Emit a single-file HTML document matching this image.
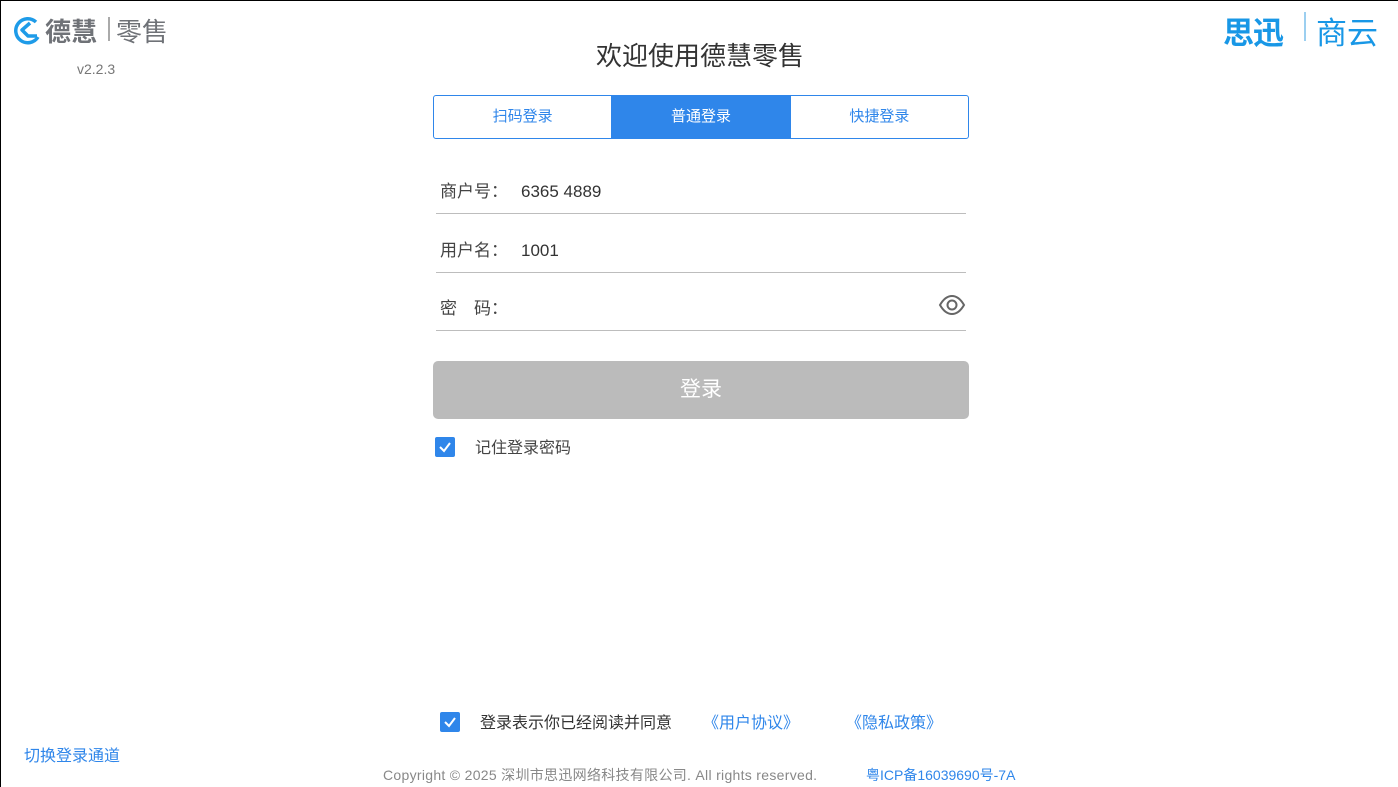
<!DOCTYPE html>
<html><head><meta charset="utf-8"><style>
*{margin:0;padding:0;box-sizing:border-box}
body{width:1398px;height:787px;background:#fff;position:relative;overflow:hidden;font-family:"Liberation Sans","Noto Sans CJK SC",sans-serif}
.a{position:absolute;white-space:nowrap}
.tabs{position:absolute;left:433px;top:95px;width:536px;height:44px;border:1.5px solid #2f86ea;border-radius:3px;display:flex;overflow:hidden}
.tabs div{flex:1;text-align:center;line-height:42px;font-size:15px;color:#2f86ea}
.tabs div+div{border-left:1.5px solid #2f86ea}
.tabs .on{background:#2f86ea;color:#fff}
.row{position:absolute;left:436px;width:530px;height:1px;background:#bdbdbd}
.lbl{font-size:17px;color:#444;line-height:22px}
.cb{position:absolute;width:20px;height:20px;background:#2f86ea;border-radius:2px}
.cb svg{position:absolute;left:3px;top:3px}
</style></head><body>
<div class="a" style="left:0;top:0;width:1398px;height:1px;background:#000"></div>
<div class="a" style="left:0;top:0;width:1px;height:787px;background:#000"></div>
<svg class="a" style="left:12px;top:15px" width="30" height="30" viewBox="0 0 30 30"><path d="M24 7A12 12 0 1 0 26 22" fill="none" stroke="#1e9be8" stroke-width="3.5"/><path d="M18 8L10 15L16 21H25" fill="none" stroke="#1e9be8" stroke-width="3.5" stroke-linejoin="round"/></svg>
<div class="a" style="left:45px;top:12px;font-size:26px;color:#6f7277;font-weight:bold">德慧</div>
<div class="a" style="left:108px;top:17px;width:2px;height:24px;background:#aaa"></div>
<div class="a" style="left:116px;top:12px;font-size:26px;color:#6f7277">零售</div>
<div class="a" style="left:77px;top:61px;font-size:14px;color:#777">v2.2.3</div>
<div class="a" style="left:1223px;top:8px;font-size:31px;color:#1897e6;font-weight:bold;letter-spacing:-1px">思迅</div>
<div class="a" style="left:1304px;top:12px;width:2px;height:29px;background:#9ccff0"></div>
<div class="a" style="left:1316px;top:8px;font-size:31px;color:#1897e6">商云</div>
<div class="a" style="left:596px;top:36px;font-size:26px;color:#333">欢迎使用德慧零售</div>
<div class="tabs"><div>扫码登录</div><div class="on">普通登录</div><div>快捷登录</div></div>
<div class="a lbl" style="left:440px;top:181px">商户号：</div>
<div class="a lbl" style="left:521px;top:181px;color:#333">6365 4889</div>
<div class="row" style="top:213px"></div>
<div class="a lbl" style="left:440px;top:240px">用户名：</div>
<div class="a lbl" style="left:521px;top:240px;color:#333">1001</div>
<div class="row" style="top:272px"></div>
<div class="a lbl" style="left:440px;top:298px">密　码：</div>
<svg class="a" style="left:938px;top:293px" width="28" height="24" viewBox="0 0 28 24"><path d="M2 12C6 5 10 3 14 3S22 5 26 12C22 19 18 21 14 21S6 19 2 12Z" fill="none" stroke="#666" stroke-width="2"/><circle cx="14" cy="12" r="4.5" fill="none" stroke="#666" stroke-width="2"/></svg>
<div class="row" style="top:330px"></div>
<div class="a" style="left:433px;top:361px;width:536px;height:58px;background:#bbb;border-radius:5px;color:#fff;font-size:21px;text-align:center;line-height:58px">登录</div>
<div class="cb" style="left:435px;top:437px"><svg width="14" height="14" viewBox="0 0 14 14"><path d="M2 7L6 11L12 3" fill="none" stroke="#fff" stroke-width="2"/></svg></div>
<div class="a" style="left:475px;top:438px;font-size:16px;color:#444;line-height:22px">记住登录密码</div>
<div class="cb" style="left:440px;top:712px"><svg width="14" height="14" viewBox="0 0 14 14"><path d="M2 7L6 11L12 3" fill="none" stroke="#fff" stroke-width="2"/></svg></div>
<div class="a" style="left:480px;top:713px;font-size:16px;color:#333;line-height:22px">登录表示你已经阅读并同意</div>
<div class="a" style="left:703px;top:713px;font-size:16px;color:#2f86ea;line-height:22px">《用户协议》</div>
<div class="a" style="left:846px;top:713px;font-size:16px;color:#2f86ea;line-height:22px">《隐私政策》</div>
<div class="a" style="left:24px;top:746px;font-size:16px;color:#2f86ea;line-height:22px">切换登录通道</div>
<div class="a" style="left:383px;top:765px;font-size:14px;color:#888;letter-spacing:0.3px;line-height:20px">Copyright © 2025 深圳市思迅网络科技有限公司. All rights reserved.</div>
<div class="a" style="left:866px;top:765px;font-size:14px;color:#2f86ea;line-height:20px">粤ICP备16039690号-7A</div>
</body></html>
